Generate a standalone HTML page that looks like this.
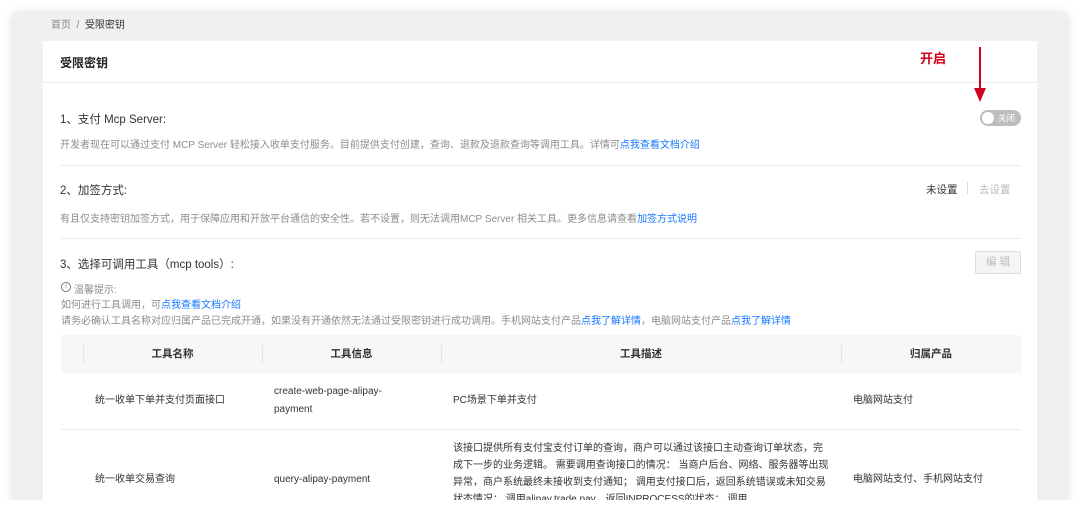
<!DOCTYPE html><html><head><meta charset="utf-8"><style>
body{margin:0;width:1080px;height:514px;background:#fff;position:relative;overflow:hidden;font-family:"Liberation Sans","Noto Sans CJK SC",sans-serif;color:#333}
.a{position:absolute;white-space:nowrap}
#card{position:absolute;left:14px;top:12px;width:1052px;height:488px;background:#f0f0f0;box-shadow:0 2px 10px rgba(0,0,0,.18);overflow:hidden}
#panel{position:absolute;left:29px;top:29px;width:994px;height:470px;background:#fff}
.hl{position:absolute;height:1px;background:#ececec}
.g{color:#8c8c8c;font-size:10px}
.b{color:#1677ff}
.s{font-size:11.5px;color:#333}
.th{position:absolute;top:335px;height:38px;line-height:38px;font-size:10.5px;font-weight:bold;color:#333;text-align:center}
.sep{position:absolute;top:345px;width:1px;height:18px;background:#e4e4e4}
.td{font-size:10px;color:#333;line-height:18px}
</style></head><body>
<div id="card"><div id="panel"></div></div>
<div class="a" style="left:51px;top:16px;font-size:10px;color:#888">首页 &nbsp;/ &nbsp;<span style="color:#333">受限密钥</span></div>
<div class="a" style="left:60px;top:54px;font-size:12px;color:#222;font-weight:bold">受限密钥</div>
<div class="hl" style="left:43px;top:82px;width:994px"></div>
<div class="a" style="left:920px;top:48px;font-size:13px;color:#d0021b;font-weight:bold">开启</div>
<div class="a" style="left:979px;top:47px;width:2px;height:42px;background:#d0021b"></div>
<div class="a" style="left:974px;top:88px;width:0;height:0;border-left:6px solid transparent;border-right:6px solid transparent;border-top:14px solid #d0021b"></div>
<div class="a" style="left:980px;top:110px;width:41px;height:16px;border-radius:8px;background:#bdbdbd"></div>
<div class="a" style="left:982px;top:112px;width:12px;height:12px;border-radius:6px;background:#fff"></div>
<div class="a" style="left:998px;top:112px;font-size:8.5px;color:#fff">关闭</div>
<div class="a s" style="left:60px;top:111px">1、支付 Mcp Server:</div>
<div class="a g" style="left:60px;top:136px">开发者现在可以通过支付 MCP Server 轻松接入收单支付服务。目前提供支付创建，查询、退款及退款查询等调用工具。详情可<span class="b">点我查看文档介绍</span></div>
<div class="hl" style="left:60px;top:165px;width:961px"></div>
<div class="a s" style="left:60px;top:182px">2、加签方式:</div>
<div class="a" style="left:926px;top:182px;font-size:10.5px;color:#333">未设置</div>
<div class="a" style="left:967px;top:182px;width:1px;height:12px;background:#ddd"></div>
<div class="a" style="left:979px;top:182px;font-size:10.5px;color:#bbb">去设置</div>
<div class="a g" style="left:60px;top:210px">有且仅支持密钥加签方式，用于保障应用和开放平台通信的安全性。若不设置，则无法调用MCP Server 相关工具。更多信息请查看<span class="b">加签方式说明</span></div>
<div class="hl" style="left:60px;top:238px;width:961px"></div>
<div class="a s" style="left:60px;top:256px">3、选择可调用工具（mcp tools）:</div>
<div class="a" style="left:975px;top:251px;width:44px;height:21px;border:1px solid #ddd;border-radius:2px;background:#f5f5f5;color:#bbb;font-size:10.5px;text-align:center;line-height:21px">编 辑</div>
<div class="a" style="left:61px;top:282px;width:8px;height:8px;border:1px solid #777;border-radius:50%;font-size:7px;line-height:8px;text-align:center;color:#777">i</div>
<div class="a g" style="left:74px;top:281px">温馨提示:</div>
<div class="a g" style="left:61px;top:296px">如何进行工具调用，可<span class="b">点我查看文档介绍</span></div>
<div class="a g" style="left:61px;top:312px">请务必确认工具名称对应归属产品已完成开通，如果没有开通依然无法通过受限密钥进行成功调用。手机网站支付产品<span class="b">点我了解详情</span>，电脑网站支付产品<span class="b">点我了解详情</span></div>
<div class="a" style="left:61px;top:335px;width:960px;height:38px;background:#f7f7f7"></div>
<div class="sep" style="left:83px"></div><div class="sep" style="left:262px"></div><div class="sep" style="left:441px"></div><div class="sep" style="left:841px"></div>
<div class="th" style="left:83px;width:179px">工具名称</div>
<div class="th" style="left:262px;width:179px">工具信息</div>
<div class="th" style="left:441px;width:400px">工具描述</div>
<div class="th" style="left:841px;width:180px">归属产品</div>
<div class="hl" style="left:61px;top:429px;width:960px"></div>
<div class="a td" style="left:95px;top:392px">统一收单下单并支付页面接口</div>
<div class="a td" style="left:274px;top:383px">create-web-page-alipay-<br>payment</div>
<div class="a td" style="left:453px;top:392px">PC场景下单并支付</div>
<div class="a td" style="left:853px;top:392px">电脑网站支付</div>
<div class="a td" style="left:95px;top:471px">统一收单交易查询</div>
<div class="a td" style="left:274px;top:471px">query-alipay-payment</div>
<div class="a td" style="left:453px;top:440px;line-height:17px">该接口提供所有支付宝支付订单的查询，商户可以通过该接口主动查询订单状态，完<br>成下一步的业务逻辑。 需要调用查询接口的情况： 当商户后台、网络、服务器等出现<br>异常，商户系统最终未接收到支付通知； 调用支付接口后，返回系统错误或未知交易<br>状态情况； 调用alipay.trade.pay，返回INPROCESS的状态； 调用</div>
<div class="a td" style="left:853px;top:471px">电脑网站支付、手机网站支付</div>
<div class="a" style="left:0;top:500px;width:1080px;height:14px;background:#fff"></div>
</body></html>
